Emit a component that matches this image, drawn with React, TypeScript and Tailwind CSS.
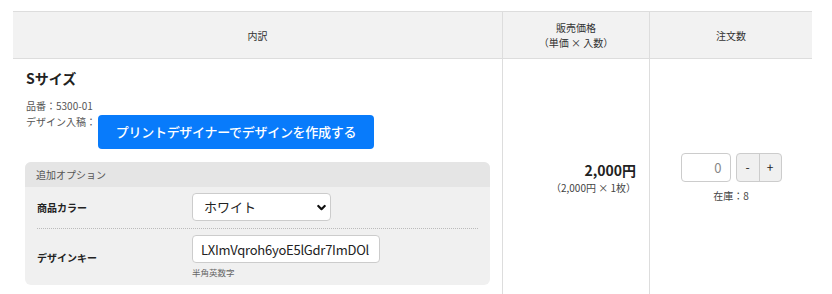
import React from "react";

export default function App() {
  const font = { fontFamily: '"Noto Sans CJK JP", "Noto Sans", sans-serif' };
  return (
    <div className="w-[832px] h-[294px] overflow-hidden bg-white text-[#333]" style={font}>
      <div className="ml-[13px] mt-[11px] w-[799px] border-t border-[#dddddd]">
        {/* header */}
        <div className="grid grid-cols-[489px_147px_163px] bg-[#f2f2f2] border-b border-[#dddddd] h-[47px] text-[10px] leading-[15px] text-[#333]">
          <div className="flex items-center justify-center">内訳</div>
          <div className="flex flex-col items-center justify-center border-l border-[#dddddd]">
            <span>販売価格</span>
            <span>（単価 × 入数）</span>
          </div>
          <div className="flex items-center justify-center border-l border-[#dddddd]">注文数</div>
        </div>
        {/* body */}
        <div className="grid grid-cols-[489px_147px_163px]">
          <div className="px-[12px] pt-[8px] pb-[12px]">
            <div className="text-[14px] font-bold leading-[22px] pl-[1px] text-[#222]">Sサイズ</div>
            <div className="mt-[9px] text-[10px] leading-[16px] text-[#555] pl-[1px]">品番：5300-01</div>
            <div className="flex items-start text-[10px] leading-[16px] text-[#555] pl-[1px]">
              <span>デザイン入稿：</span>
              <button className="mt-[1px] ml-[2px] h-[34px] w-[276px] rounded-[4px] bg-[#087bfb] text-white text-[13px] font-medium leading-[20px] tracking-[-0.3px]">
                プリントデザイナーでデザインを作成する
              </button>
            </div>
            <div className="mt-[13px] rounded-[6px] bg-[#f0f0f0] overflow-hidden">
              <div className="h-[25px] bg-[#e5e5e5] px-[11px] flex items-center text-[10px] text-[#555]">追加オプション</div>
              <div className="px-[12px]">
                <div className="flex items-center pt-[6px] pb-[7px] border-b border-dotted border-[#bbbbbb]">
                  <div className="w-[155px] text-[10px] font-bold text-[#222]">商品カラー</div>
                  <div className="relative w-[139px] h-[28px]">
                    <select className="appearance-none w-full h-full bg-white border border-[#cccccc] rounded-[4px] pl-[11px] text-[13px] text-[#222] outline-none" style={font} defaultValue="white">
                      <option value="white">ホワイト</option>
                    </select>
                    <svg className="absolute right-[5px] top-[10px] pointer-events-none" width="9" height="9" viewBox="0 0 9 9">
                      <path d="M1.3 3 L4.5 6.2 L7.7 3" fill="none" stroke="#111" strokeWidth="2.2" strokeLinecap="round" strokeLinejoin="round" />
                    </svg>
                  </div>
                </div>
                <div className="flex items-center pt-[6px] pb-[6px]">
                  <div className="w-[155px] text-[10px] font-bold text-[#222]">デザインキー</div>
                  <div className="flex flex-col">
                    <input
                      readOnly
                      value="LXImVqroh6yoE5lGdr7ImDOl"
                      className="w-[188px] h-[28px] bg-white border border-[#cccccc] rounded-[4px] px-[8px] text-[13px] tracking-[-0.25px] text-[#222] outline-none"
                      style={font}
                    />
                    <span className="mt-[3px] text-[8.5px] leading-[13px] text-[#666]">半角英数字</span>
                  </div>
                </div>
              </div>
            </div>
          </div>
          <div className="border-l border-[#dddddd] flex flex-col items-end justify-center pr-[13px]">
            <div className="text-[14px] font-bold leading-[20px] text-[#222]">2,000円</div>
            <div className="text-[10px] leading-[16px] text-[#444]">（2,000円 × 1枚）</div>
          </div>
          <div className="border-l border-[#dddddd] flex flex-col items-center justify-center">
            <div className="flex items-center">
              <input
                readOnly
                value="0"
                className="w-[50px] h-[29px] bg-white border border-[#cccccc] rounded-[4px] px-[8px] text-right text-[13px] text-[#888] outline-none"
                style={font}
              />
              <div className="ml-[5px] flex h-[29px] border border-[#cccccc] rounded-[4px] overflow-hidden bg-[#f0f0f0]">
                <button className="w-[22px] h-full text-[12px] text-[#222]">-</button>
                <button className="w-[22px] h-full border-l border-[#cccccc] text-[12px] text-[#222]">+</button>
              </div>
            </div>
            <div className="mt-[6px] text-[10px] leading-[16px] text-[#444]">在庫：8</div>
          </div>
        </div>
      </div>
    </div>
  );
}
